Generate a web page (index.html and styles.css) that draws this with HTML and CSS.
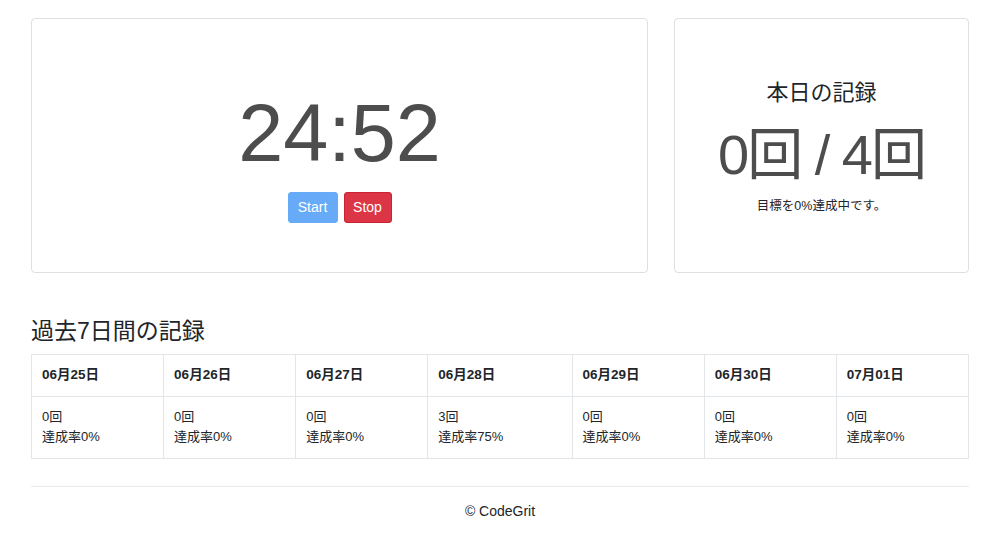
FILE: index.html
```html
<!DOCTYPE html>
<html lang="ja">
<head>
<meta charset="utf-8">
<title>Pomodoro</title>
<link rel="stylesheet" href="styles.css">
</head>
<body>
<div class="container">
  <div class="top-row">
    <section class="card timer-card">
      <div class="timer">24:52</div>
      <div class="buttons">
        <button class="btn btn-start">Start</button>
        <button class="btn btn-stop">Stop</button>
      </div>
    </section>
    <section class="card today-card">
      <h2 class="today-title">本日の記録</h2>
      <div class="today-count">0回 / 4回</div>
      <p class="today-note">目標を0%達成中です。</p>
    </section>
  </div>

  <h2 class="history-title">過去7日間の記録</h2>
  <table class="history">
    <thead>
      <tr>
        <th>06月25日</th><th>06月26日</th><th>06月27日</th><th>06月28日</th><th>06月29日</th><th>06月30日</th><th>07月01日</th>
      </tr>
    </thead>
    <tbody>
      <tr>
        <td>0回<br>達成率0%</td>
        <td>0回<br>達成率0%</td>
        <td>0回<br>達成率0%</td>
        <td>3回<br>達成率75%</td>
        <td>0回<br>達成率0%</td>
        <td>0回<br>達成率0%</td>
        <td>0回<br>達成率0%</td>
      </tr>
    </tbody>
  </table>

  <footer class="footer">
    <p>© CodeGrit</p>
  </footer>
</div>
</body>
</html>
```
FILE: styles.css
```css
* { box-sizing: border-box; }
html, body { margin: 0; padding: 0; background: #fff; }
body {
  font-family: "Liberation Sans", "Noto Sans CJK JP", sans-serif;
  color: #212529;
  font-size: 13px;
  line-height: 1.5;
}
.container {
  width: 938px;
  margin: 0 auto;
  padding-top: 18px;
}
.top-row {
  display: grid;
  grid-template-columns: 617px 295px;
  column-gap: 26px;
}
.card {
  border: 1px solid rgba(0,0,0,.125);
  border-radius: 4px;
  height: 255px;
  display: flex;
  flex-direction: column;
  align-items: center;
  justify-content: flex-start;
}
.timer-card { padding-top: 74px; }
.timer {
  font-size: 81px;
  line-height: 81px;
  color: #4d4d4d;
}
.buttons {
  display: flex;
  gap: 6px;
  margin-top: 18px;
}
.btn {
  font-family: "Liberation Sans", sans-serif;
  font-size: 14px;
  border: 1px solid transparent;
  border-radius: 3px;
  color: #fff;
  height: 31px;
  padding: 0;
  line-height: 29px;
}
.btn-start { background: #66aaf8; border-color: #66aaf8; width: 50px; }
.btn-stop { background: #dc3545; border-color: #c82333; width: 48px; }
.today-card { padding-top: 61px; }
.today-title {
  margin: 0;
  font-size: 22px;
  font-weight: 400;
  line-height: 26px;
}
.today-count {
  font-size: 56px;
  letter-spacing: -2px;
  line-height: 1;
  color: #4d4d4d;
  margin-top: 21px;
}
.today-note {
  margin: 14px 0 0;
  font-size: 12.5px;
  line-height: 18px;
}
.history-title {
  font-size: 23px;
  font-weight: 400;
  line-height: 28px;
  margin: 44px 0 9px;
}
.history {
  width: 100%;
  border-collapse: collapse;
  font-size: 13px;
  line-height: 20px;
}
.history th, .history td {
  border: 1px solid #e3e6e9;
  padding: 10px 10px 11px;
  text-align: left;
  vertical-align: top;
}
.history th { font-weight: 700; font-size: 13.5px; }
.footer {
  margin-top: 27px;
  border-top: 1px solid #e9ecef;
  text-align: center;
  padding-top: 14px;
}
.footer p { margin: 0; font-size: 14px; }
```
